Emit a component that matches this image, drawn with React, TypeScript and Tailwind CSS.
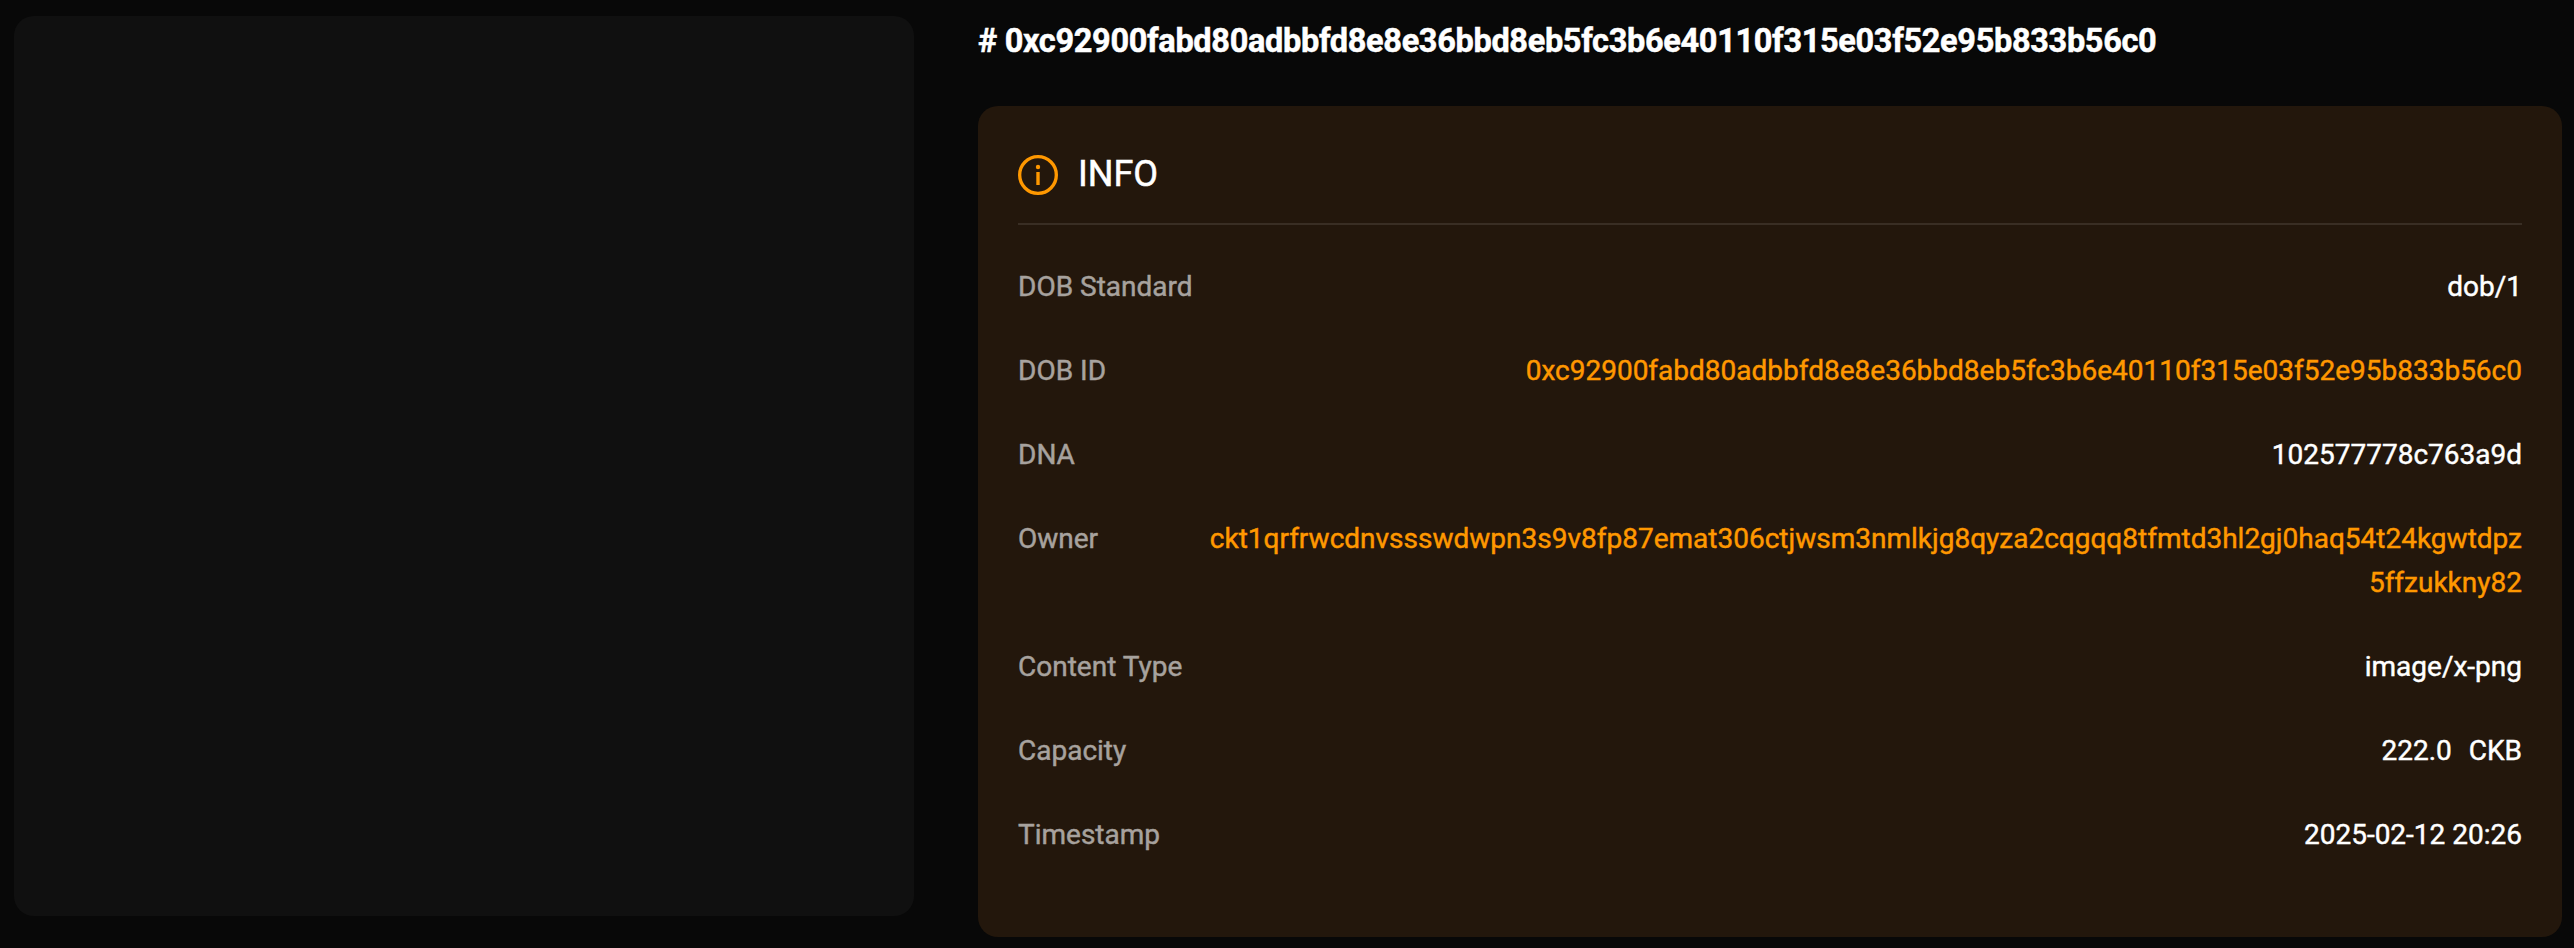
type RowProps = { label: string; value: string; unit?: string; link?: boolean };

const Row = ({ label, value, unit, link = false }: RowProps) => (
  <div className="flex items-start justify-between text-[28px] leading-[44px] [-webkit-text-stroke:0.45px]">
    <span className="text-[#a7a29e]">{label}</span>
    <span className={link ? "max-w-[1316px] break-all text-right text-[#ff9800]" : "text-right text-white"}>
      {value}
      {unit && <span className="ml-[17px]">{unit}</span>}
    </span>
  </div>
);

export default function App() {
  return (
    <main className="flex h-[948px] w-[2574px] items-start overflow-hidden bg-[#080808] pl-[14px] pt-4 font-['Roboto',sans-serif]">
      <div className="h-[900px] w-[900px] shrink-0 rounded-[20px] bg-[#101010]" />
      <div className="ml-16 w-[1584px] shrink-0">
        <h1 className="h-[90px] pt-px text-[32.5px] font-bold leading-[48px] tracking-[-0.33px] text-white [-webkit-text-stroke:0.5px]">
          # 0xc92900fabd80adbbfd8e8e36bbd8eb5fc3b6e40110f315e03f52e95b833b56c0
        </h1>
        <section className="h-[831px] rounded-[20px] bg-[#23170c] px-10 pt-10">
          <header className="flex h-[79px] items-start gap-5 border-b-2 border-[#392e24] pt-px">
            <svg className="mt-2 size-10" viewBox="0 0 40 40" fill="none" stroke="#ff9800">
              <circle cx="20" cy="20" r="18.33" strokeWidth="3.34" />
              <path d="M20 17v13" strokeWidth="3.4" />
              <circle cx="20" cy="12" r="2.2" fill="#ff9800" stroke="none" />
            </svg>
            <h2 className="text-[36px] leading-[54px] text-white [-webkit-text-stroke:0.5px]">INFO</h2>
          </header>
          <div className="mt-10 flex flex-col gap-10">
            <Row label="DOB Standard" value="dob/1" />
            <Row label="DOB ID" value="0xc92900fabd80adbbfd8e8e36bbd8eb5fc3b6e40110f315e03f52e95b833b56c0" link />
            <Row label="DNA" value="102577778c763a9d" />
            <Row label="Owner" value="ckt1qrfrwcdnvssswdwpn3s9v8fp87emat306ctjwsm3nmlkjg8qyza2cqgqq8tfmtd3hl2gj0haq54t24kgwtdpz5ffzukkny82" link />
            <Row label="Content Type" value="image/x-png" />
            <Row label="Capacity" value="222.0" unit="CKB" />
            <Row label="Timestamp" value="2025-02-12 20:26" />
          </div>
        </section>
      </div>
    </main>
  );
}
